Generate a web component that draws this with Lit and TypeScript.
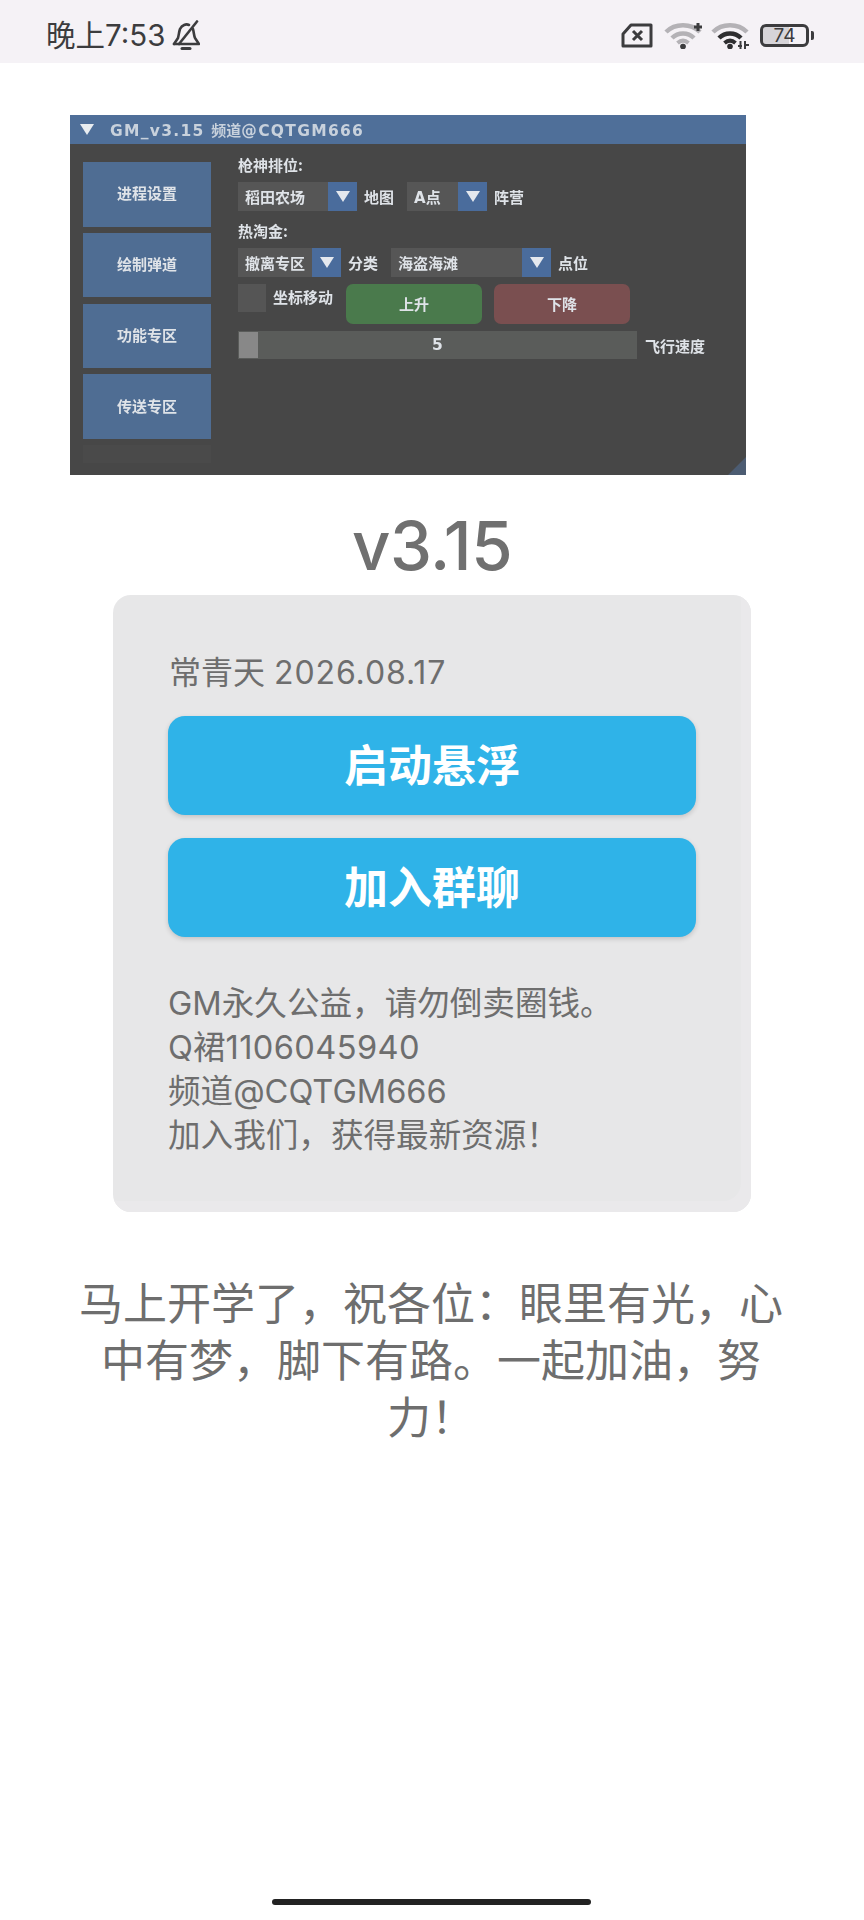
import { LitElement, html, css, svg } from "lit";
import { customElement } from "lit/decorators.js";

const arrow = html`<span class="arrow"><svg width="14" height="11" viewBox="0 0 14 11"><path d="M0 0H14L7 11Z" fill="#e4e8ee"/></svg></span>`;

const combo = (text: string, cls: string) => html`<div class="combo ${cls}"><span class="val">${text}</span>${arrow}</div>`;

const wifiArcs = (outer: string, inner: string) => svg`
  <path d="M2 11 C11 2 27 2 36 11" fill="none" stroke="${outer}" stroke-width="4.5"/>
  <path d="M8 17 C14 11 24 11 30 17" fill="none" stroke="${inner}" stroke-width="4.5"/>
  <path d="M13.5 22 C17 19 21 19 24.5 22" fill="none" stroke="${inner}" stroke-width="4"/>
  <circle cx="19" cy="25.5" r="2.8" fill="${inner}"/>`;

@customElement("app-root")
export class AppRoot extends LitElement {
  static styles = css`
    :host { display: block; width: 864px; height: 1920px; background: #fff; position: relative; overflow: hidden;
      font-family: Inter, "Noto Sans CJK SC", sans-serif; color: #6e6e6e; }
    .status { height: 63px; background: #f5f2f6; display: flex; align-items: center; padding: 7px 0 0 46px; box-sizing: border-box; color: #3c3c3e; }
    .time { font-size: 29.5px; line-height: 40px; font-weight: 400; width: 126px; white-space: nowrap; }
    .bell { display: block; }
    .status-right { margin-left: auto; display: flex; align-items: center; padding-right: 50px; }
    .sim { margin-right: 11px; }
    .wifi1 { margin-right: 7px; }
    .wifi2 { margin-right: 11px; }
    .battery { width: 49px; height: 23px; border: 3px solid #3c3c3e; border-radius: 6px; box-sizing: border-box; font-size: 19px; line-height: 17px; text-align: center; color: #3c3c3e; background: linear-gradient(90deg, #d6d4d8 0, #d6d4d8 60%, transparent 60%); background-clip: padding-box; }
    .nub { width: 3px; height: 9px; margin-left: 2px; background: #3c3c3e; border-radius: 0 2px 2px 0; }

    .main { display: flex; flex-direction: column; padding-top: 52px; }
    .win { width: 676px; height: 360px; margin-left: 70px; background: #474747; color: #dfe3e8; position: relative; overflow: hidden; display: flex; flex-direction: column; filter: blur(0.35px); font-family: "Noto Sans CJK SC", sans-serif; font-weight: 700; font-size: 15px; }
    .tbar { height: 29px; background: #4f6f99; display: flex; align-items: center; padding-left: 10px; color: #c8d1dc; flex: none; }
    .tbar svg { margin-right: 16px; }
    .ttl { font-family: "DejaVu Sans", "Noto Sans CJK SC", sans-serif; font-size: 15.5px; letter-spacing: 1.3px; font-weight: 700; white-space: nowrap; }
    .ttl b { font-family: "Noto Sans CJK SC", sans-serif; font-size: 15px; letter-spacing: 0; font-weight: 700; }
    .wbody { display: flex; flex: 1; }
    .side { width: 128px; margin-left: 13px; padding-top: 18px; display: flex; flex-direction: column; gap: 6.3px; flex: none; }
    .sbtn { height: 64.5px; background: #4f6d93; display: flex; align-items: center; justify-content: center; box-sizing: border-box; padding-bottom: 3px; }
    .sfoot { height: 18px; background: #4a4a4a; }
    .content { margin-left: 27px; padding-top: 9px; flex: 1; display: flex; flex-direction: column; }
    .lbl { height: 24px; line-height: 24px; }
    .row { display: flex; align-items: center; height: 29px; margin-top: 5px; white-space: nowrap; }
    .lbl2 { margin-top: 8px; }
    .combo { height: 29px; background: #565656; display: flex; align-items: center; justify-content: space-between; box-sizing: border-box; padding-left: 7px; flex: none; }
    .arrow { width: 29px; height: 29px; background: #4a6c9c; display: flex; align-items: center; justify-content: center; }
    .c1 { width: 119px; } .c2 { width: 80px; } .c3 { width: 103px; } .c4 { width: 160px; }
    .m7 { margin: 0 13px 0 7px; }
    .ml7 { margin-left: 7px; }
    .latin { font-family: "DejaVu Sans", "Noto Sans CJK SC", sans-serif; }
    .row3 { display: flex; height: 40px; margin-top: 7px; white-space: nowrap; }
    .chk { width: 28px; height: 28px; background: #555; }
    .chklbl { width: 73px; margin-left: 7px; line-height: 26px; }
    .act { width: 136px; height: 40px; border-radius: 7px; display: flex; align-items: center; justify-content: center; box-sizing: border-box; padding-bottom: 2px; }
    .green { background: #4a7a4c; margin-right: 12px; }
    .red { background: #7a4f50; }
    .sliderrow { display: flex; align-items: center; margin-top: 7px; height: 28px; white-space: nowrap; }
    .slider { width: 399px; height: 28px; background: #5a5c5a; display: flex; align-items: center; justify-content: center; position: relative; margin-right: 8px; font-family: "DejaVu Sans", sans-serif; font-size: 15.5px; }
    .grab { position: absolute; left: 1px; top: 1px; width: 19px; height: 26px; background: #888; }
    .grip { position: absolute; right: 0; bottom: 0; }

    .ver { text-align: center; font-size: 67px; line-height: 80px; font-weight: 500; letter-spacing: -0.5px; color: #707070; margin-top: 31px; }
    .card { width: 638px; height: 617px; margin: 9px 0 0 113px; background: #e7e7e8; border-radius: 18px; box-sizing: border-box; padding: 56px 55px 0; box-shadow: inset -10px -11px 0 #eae9eb; }
    .date { font-size: 32px; line-height: 44px; margin-left: 1px; white-space: nowrap; }
    .digits { letter-spacing: 0.9px; }
    .btn { height: 99px; width: 528px; background: #2fb3e8; border-radius: 17px; color: #fff; font-size: 44px; font-weight: 700; display: flex; align-items: center; justify-content: center; box-sizing: border-box; padding-bottom: 6px; box-shadow: 0 2px 5px rgba(0,0,0,.16); }
    .b1 { margin-top: 21px; } .b2 { margin-top: 23px; }
    .info { margin-top: 44px; font-size: 32.6px; line-height: 44px; }
    .qq { letter-spacing: 0.4px; }
    .msg { width: 720px; margin: 64px 0 0 71px; text-align: center; font-size: 44px; line-height: 57px; white-space: nowrap; }
    .home { position: absolute; left: 272px; bottom: 15px; width: 319px; height: 6px; border-radius: 3px; background: #222; }
  `;

  render() {
    return html`
      <div class="status">
        <span class="time">晚上7:53</span>
        <svg class="bell" width="28" height="30" viewBox="0 0 28 30" fill="none" stroke="#3c3c3e" stroke-width="2.6" stroke-linejoin="round" stroke-linecap="round">
          <path d="M2 24 L6 18 C7 14 7 12 8 9 C10 5 14 3.5 17 5"/>
          <path d="M21 9 C22 13 22 16 23 18 L27 24 H2"/>
          <path d="M25 1.5 L7 24"/>
          <path d="M10 28.5 H18" stroke-width="3"/>
        </svg>
        <div class="status-right">
          <svg class="sim" width="32" height="25" viewBox="0 0 32 25" fill="none" stroke="#3c3c3e" stroke-width="3" stroke-linejoin="round">
            <path d="M10 2 H30 V23 H2 V11 Z"/>
            <path d="M12 8 L21 17 M21 8 L12 17" stroke-width="3"/>
          </svg>
          <svg class="wifi1" width="40" height="28" viewBox="0 0 40 28">
            ${wifiArcs("#b4b2b6", "#b4b2b6")}
            <circle cx="19" cy="25.5" r="2.8" fill="#3c3c3e"/>
            <path d="M34 2 V10 M30 6 H38" stroke="#3c3c3e" stroke-width="3"/>
          </svg>
          <svg class="wifi2" width="38" height="28" viewBox="0 0 38 28">
            ${wifiArcs("#b4b2b6", "#2e2e30")}
            <path d="M27 25 H31 M29.5 20 V28 M34 20 V28 M34 24 H38" stroke="#3c3c3e" stroke-width="2"/>
          </svg>
          <div class="battery">74</div>
          <div class="nub"></div>
        </div>
      </div>
      <div class="main">
        <div class="win">
          <div class="tbar">
            <svg width="14" height="11" viewBox="0 0 14 11"><path d="M0 0H14L7 11Z" fill="#e8ecf0"/></svg>
            <span class="ttl">GM_v3.15 <b>频道</b>@CQTGM666</span>
          </div>
          <div class="wbody">
            <div class="side">
              <div class="sbtn">进程设置</div>
              <div class="sbtn">绘制弹道</div>
              <div class="sbtn">功能专区</div>
              <div class="sbtn">传送专区</div>
              <div class="sfoot"></div>
            </div>
            <div class="content">
              <div class="lbl">枪神排位:</div>
              <div class="row">
                ${combo("稻田农场", "c1")}<span class="m7">地图</span>
                <div class="combo c2"><span class="val"><span class="latin">A</span>点</span>${arrow}</div>
                <span class="ml7">阵营</span>
              </div>
              <div class="lbl lbl2">热淘金:</div>
              <div class="row">
                ${combo("撤离专区", "c3")}<span class="m7">分类</span>
                ${combo("海盗海滩", "c4")}<span class="ml7">点位</span>
              </div>
              <div class="row3">
                <div class="chk"></div>
                <div class="chklbl">坐标移动</div>
                <div class="act green">上升</div>
                <div class="act red">下降</div>
              </div>
              <div class="sliderrow">
                <div class="slider"><div class="grab"></div>5</div>
                <span>飞行速度</span>
              </div>
            </div>
          </div>
          <svg class="grip" width="18" height="18" viewBox="0 0 18 18"><path d="M18 0V18H0Z" fill="#4c5c72"/></svg>
        </div>
        <div class="ver">v3.15</div>
        <div class="card">
          <div class="date">常青天 <span class="digits">2026.08.17</span></div>
          <div class="btn b1">启动悬浮</div>
          <div class="btn b2">加入群聊</div>
          <div class="info">
            <div>GM永久公益，请勿倒卖圈钱。</div>
            <div>Q裙<span class="qq">1106045940</span></div>
            <div>频道@CQTGM666</div>
            <div>加入我们，获得最新资源！</div>
          </div>
        </div>
        <div class="msg">
          <div>马上开学了，祝各位：眼里有光，心</div>
          <div>中有梦，脚下有路。一起加油，努</div>
          <div>力！</div>
        </div>
      </div>
      <div class="home"></div>
    `;
  }
}
